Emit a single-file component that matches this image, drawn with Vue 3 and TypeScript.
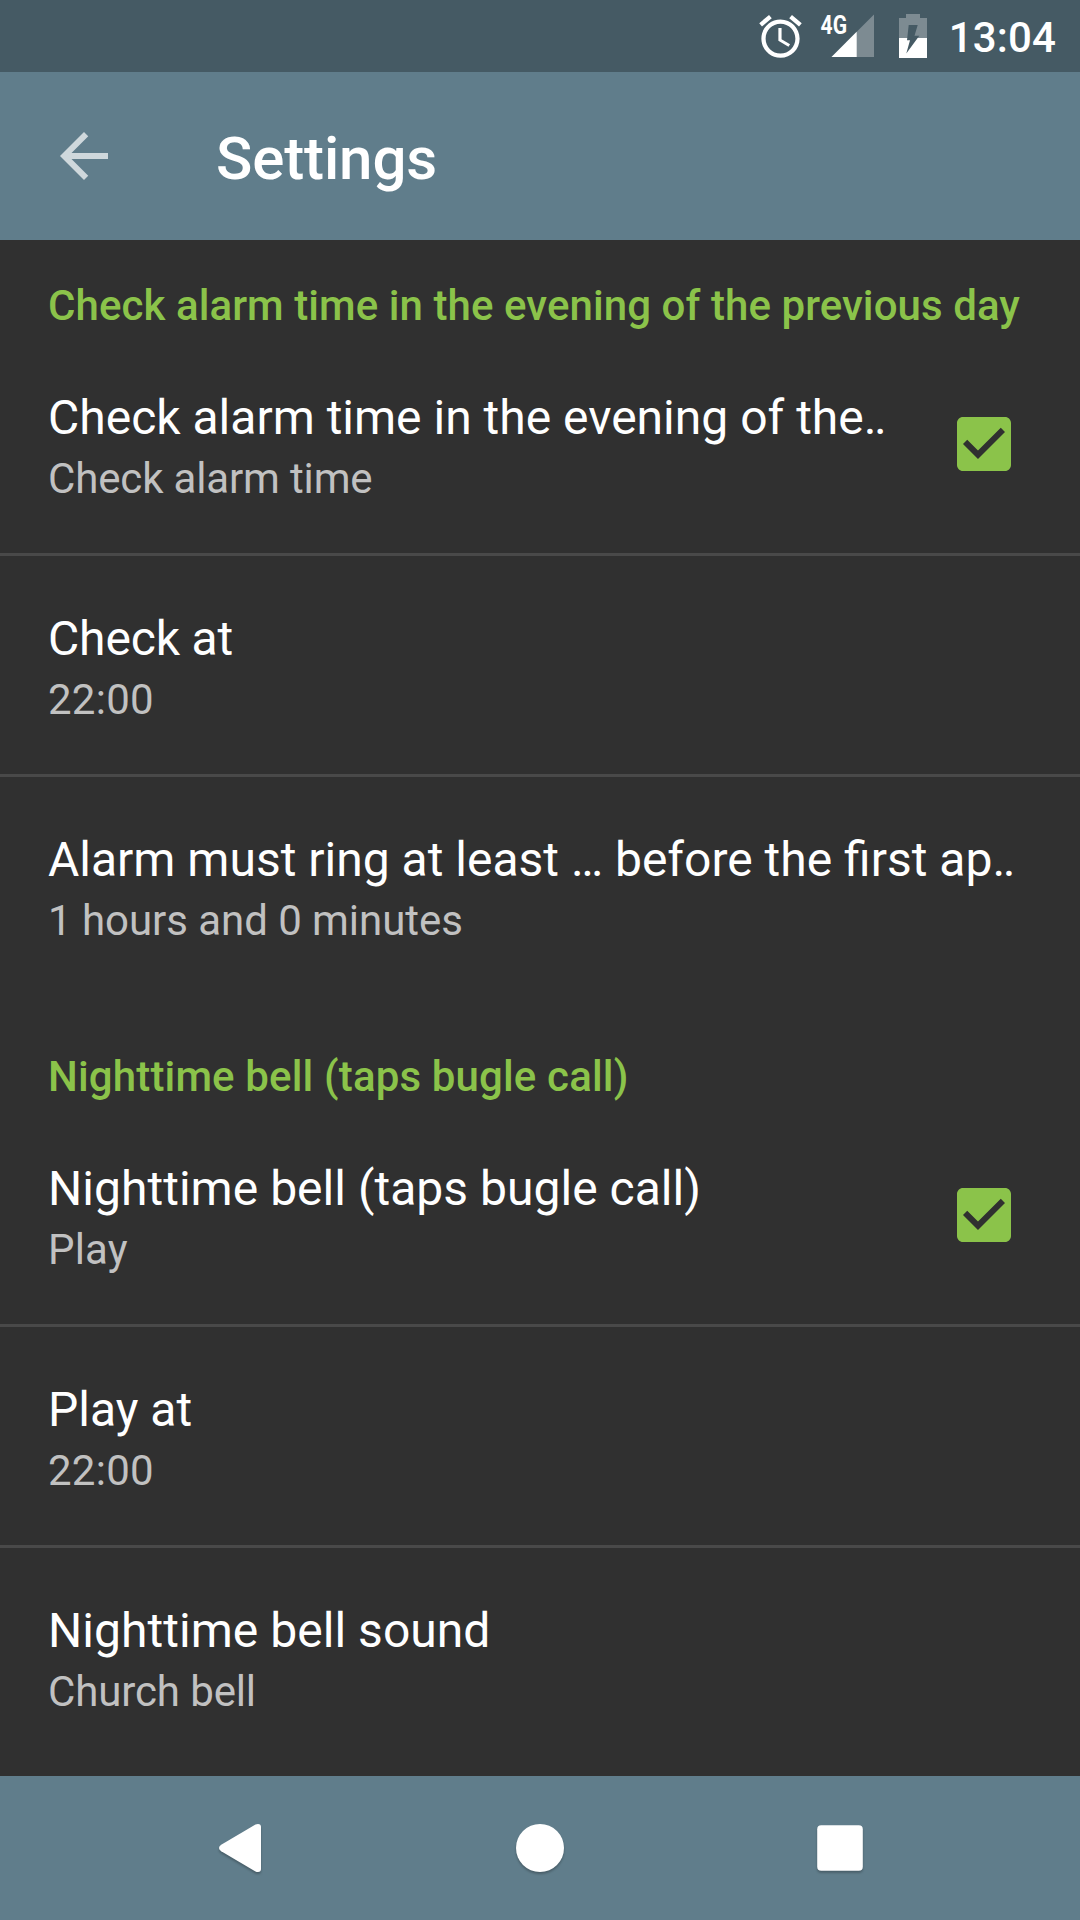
<script setup lang="ts">
interface Label {
  text: string
  /* extra letter spacing in px */
  tracking?: number
}

interface Preference {
  title: Label
  summary: Label
  checked?: boolean
}

interface Category {
  label: Label
  items: Preference[]
}

const categories: Category[] = [
  {
    label: { text: 'Check alarm time in the evening of the previous day', tracking: 0.07 },
    items: [
      {
        title: { text: 'Check alarm time in the evening of the‥' },
        summary: { text: 'Check alarm time', tracking: -0.15 },
        checked: true,
      },
      { title: { text: 'Check at', tracking: -0.15 }, summary: { text: '22:00', tracking: 0.25 } },
      {
        title: { text: 'Alarm must ring at least … before the first ap‥' },
        summary: { text: '1 hours and 0 minutes', tracking: -0.05 },
      },
    ],
  },
  {
    label: { text: 'Nighttime bell (taps bugle call)', tracking: 0.15 },
    items: [
      {
        title: { text: 'Nighttime bell (taps bugle call)', tracking: 0.03 },
        summary: { text: 'Play', tracking: 0.2 },
        checked: true,
      },
      { title: { text: 'Play at' }, summary: { text: '22:00', tracking: 0.25 } },
      {
        title: { text: 'Nighttime bell sound', tracking: 0.04 },
        summary: { text: 'Church bell', tracking: -0.12 },
      },
    ],
  },
]

const spacing = (label: Label) => (label.tracking ? { letterSpacing: `${label.tracking}px` } : undefined)
</script>

<template>
  <div class="screen">
    <div class="status">
      <svg class="alarm" viewBox="0 0 24 24" fill="#fff">
        <path d="M22 5.72l-4.6-3.86-1.29 1.53 4.6 3.86L22 5.72zM7.88 3.39L6.6 1.86 2 5.71l1.29 1.53 4.59-3.85zM12.5 8H11v6l4.75 2.85.75-1.23-4-2.37V8zM12 4c-4.97 0-9 4.03-9 9s4.02 9 9 9c4.97 0 9-4.03 9-9s-4.03-9-9-9zm0 16c-3.87 0-7-3.13-7-7s3.13-7 7-7 7 3.13 7 7-3.13 7-7 7z" />
      </svg>
      <svg class="signal" viewBox="0 0 54 72">
        <path d="M54 14.5V57H11.5z" fill="#fff" fill-opacity=".3" />
        <path d="M36.7 31.8V57H11.5z" fill="#fff" />
        <text x="0.6" y="33.500" textLength="26.500" lengthAdjust="spacingAndGlyphs" class="net">4G</text>
      </svg>
      <svg class="battery" viewBox="0 0 28 72">
        <path d="M7 14h14v4h7v20H0V18h7z" fill="#fff" fill-opacity=".3" />
        <path d="M0 38h28v20H0z" fill="#fff" />
        <path d="M9.7 25h9l-3.2 10.7h4.8L7.3 53.5 11 40.2H8z" fill="#455a64" />
      </svg>
      <span class="clock">13:04</span>
    </div>

    <header class="appbar">
      <svg class="back" viewBox="0 0 24 24" fill="#fff" fill-opacity=".7">
        <path d="M20 11H7.83l5.59-5.59L12 4l-8 8 8 8 1.41-1.41L7.83 13H20v-2z" />
      </svg>
      <h1>Settings</h1>
    </header>

    <main>
      <section v-for="category in categories" :key="category.label.text">
        <h2 :style="spacing(category.label)">{{ category.label.text }}</h2>
        <div v-for="item in category.items" :key="item.title.text" class="item">
          <div class="texts">
            <div class="title" :style="spacing(item.title)">{{ item.title.text }}</div>
            <div class="summary" :style="spacing(item.summary)">{{ item.summary.text }}</div>
          </div>
          <svg v-if="item.checked" class="check" viewBox="0 0 24 24" fill="#8bc34a">
            <path d="M19 3H5c-1.11 0-2 .9-2 2v14c0 1.1.89 2 2 2h14c1.11 0 2-.9 2-2V5c0-1.1-.89-2-2-2zm-9 14l-5-5 1.41-1.41L10 14.17l7.59-7.59L19 8l-9 9z" />
          </svg>
        </div>
      </section>
    </main>

    <nav>
      <svg viewBox="0 0 72 72" fill="#fff">
        <path d="M17.200 32.700L51.500 12.500Q52.500 12 54 12Q57 12 57 15V57Q57 60 54 60Q52.500 60 51.500 59.500L17.200 39.300Q15 38 15 36Q15 34 17.200 32.700z" />
      </svg>
      <svg viewBox="0 0 72 72" fill="#fff"><circle cx="36" cy="36" r="24" /></svg>
      <svg viewBox="0 0 72 72" fill="#fff"><rect x="13.200" y="13.200" width="45.600" height="45.600" rx="4" /></svg>
    </nav>
  </div>
</template>

<style>
body {
  background: #303030;
}
</style>

<style scoped>
.screen {
  width: 1080px;
  height: 1920px;
  display: flex;
  flex-direction: column;
  overflow: hidden;
  background: #303030;
  color: #fff;
  font-family: Roboto, sans-serif;
}
svg {
  display: block;
  flex: none;
}
.status {
  flex: none;
  height: 72px;
  display: flex;
  justify-content: flex-end;
  padding-right: 24px;
  background: #455a64;
}
.alarm {
  width: 51px;
  height: 51px;
  margin: 11px 14px 0 0;
}
.signal {
  width: 54px;
  height: 72px;
  margin-right: 25px;
}
.net {
  font: 700 26px Roboto, sans-serif;
  fill: #fff;
}
.battery {
  width: 28px;
  height: 72px;
}
.clock {
  width: 129px;
  text-align: right;
  font-size: 42px;
  font-weight: 500;
  line-height: 49px;
  letter-spacing: 0.15px;
  margin-top: 13px;
}
.appbar {
  flex: none;
  height: 168px;
  display: flex;
  align-items: flex-start;
  padding-left: 48px;
  background: #607d8b;
}
.back {
  width: 72px;
  height: 72px;
  margin: 48px 96px 0 0;
}
h1 {
  margin: 51px 0 0;
  font-size: 60px;
  font-weight: 500;
  line-height: 71px;
  letter-spacing: -0.12px;
}
main {
  flex: 1;
  min-height: 0;
  overflow: hidden;
}
h2 {
  margin: 0;
  height: 95px;
  box-sizing: border-box;
  padding: 41px 48px 0;
  font-size: 42px;
  font-weight: 500;
  line-height: 49px;
  color: #8bc34a;
  white-space: nowrap;
}
section + section {
  margin-top: 16px;
}
.item {
  height: 218px;
  display: flex;
  align-items: center;
  justify-content: space-between;
  padding: 0 60px 0 48px;
}
.item + .item {
  border-top: 3px solid #494949;
}
.texts {
  align-self: flex-start;
  padding-top: 54px;
  white-space: nowrap;
}
.title {
  font-size: 48px;
  line-height: 57px;
}
.summary {
  margin-top: 8px;
  font-size: 42px;
  line-height: 49px;
  color: #c1c1c1;
}
.check {
  width: 72px;
  height: 72px;
}
nav {
  flex: none;
  height: 144px;
  display: flex;
  align-items: center;
  justify-content: center;
  gap: 228px;
  background: #607d8b;
}
nav svg {
  width: 72px;
  height: 72px;
  filter: drop-shadow(0 2px 1px rgba(0, 0, 0, 0.25));
}
</style>
